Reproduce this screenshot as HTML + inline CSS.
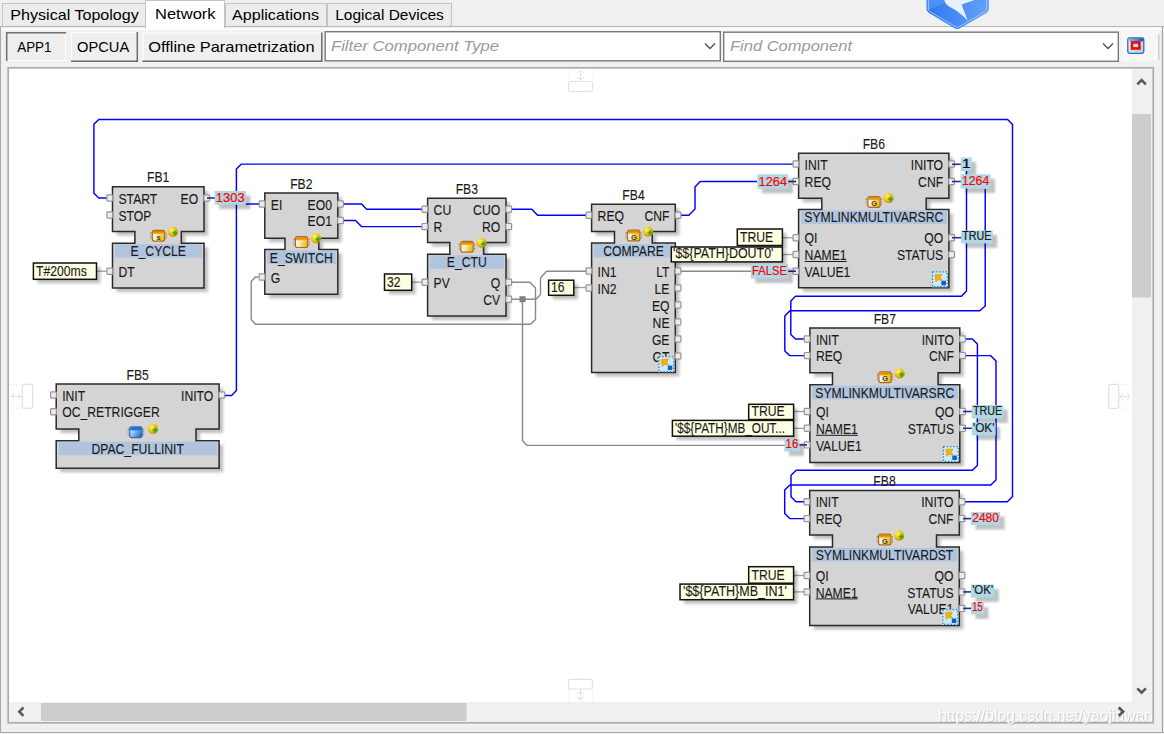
<!DOCTYPE html>
<html><head><meta charset="utf-8"><style>
html,body{margin:0;padding:0;background:#f0f0f0;overflow:hidden}
svg{display:block;font-family:"Liberation Sans",sans-serif}
</style></head><body>
<svg width="1164" height="734" viewBox="0 0 1164 734">
<rect x="0" y="0" width="1164" height="734" fill="#f0f0f0"/>
<rect x="2.5" y="3.5" width="143" height="24" fill="#ececec" stroke="#c4c4c4" stroke-width="1"/>
<text x="10.3" y="19.5" font-size="15" fill="#000" text-anchor="start" textLength="128.5" lengthAdjust="spacingAndGlyphs" >Physical Topology</text>
<rect x="225.5" y="3.5" width="101" height="24" fill="#ececec" stroke="#c4c4c4" stroke-width="1"/>
<text x="232.0" y="19.5" font-size="15" fill="#000" text-anchor="start" textLength="87.0" lengthAdjust="spacingAndGlyphs" >Applications</text>
<rect x="327.5" y="3.5" width="124" height="24" fill="#ececec" stroke="#c4c4c4" stroke-width="1"/>
<text x="335.2" y="19.5" font-size="15" fill="#000" text-anchor="start" textLength="108.6" lengthAdjust="spacingAndGlyphs" >Logical Devices</text>
<line x1="0" y1="26.5" x2="1164" y2="26.5" stroke="#b8b8b8" stroke-width="1.2"/>
<rect x="1" y="27.2" width="1161" height="3.3" fill="#fbfbfb"/>
<rect x="145.5" y="0.5" width="79" height="27" fill="#ffffff" stroke="#c4c4c4" stroke-width="1"/>
<text x="155.0" y="19.0" font-size="15" fill="#000" text-anchor="start" textLength="60.6" lengthAdjust="spacingAndGlyphs" >Network</text>
<rect x="146" y="26" width="78" height="3" fill="#ffffff"/>
<line x1="0.5" y1="27" x2="0.5" y2="733" stroke="#a8a8a8" stroke-width="1"/>
<line x1="1162.5" y1="27" x2="1162.5" y2="733" stroke="#a8a8a8" stroke-width="1.2"/>
<line x1="0" y1="732.5" x2="1164" y2="732.5" stroke="#a8a8a8" stroke-width="1.2"/>
<defs><pattern id="dots" width="2" height="2" patternUnits="userSpaceOnUse"><rect width="2" height="2" fill="#f6f6f6"/><rect width="1" height="1" fill="#e6e6e6"/><rect x="1" y="1" width="1" height="1" fill="#e6e6e6"/></pattern></defs>
<rect x="6" y="32" width="60" height="29" fill="url(#dots)"/>
<path d="M6.7,61 L6.7,32.7 L66,32.7" fill="none" stroke="#707070" stroke-width="1.5"/>
<path d="M8,60.5 L65.5,60.5 L65.5,34" fill="none" stroke="#ffffff" stroke-width="1"/>
<text x="17.2" y="52.0" font-size="15" fill="#000" text-anchor="start" textLength="34.3" lengthAdjust="spacingAndGlyphs" >APP1</text>
<rect x="71" y="32" width="67" height="30" fill="#efefef"/>
<path d="M71.5,62 L71.5,32.5 L138,32.5" fill="none" stroke="#ffffff" stroke-width="1"/>
<path d="M71,61.3 L137.3,61.3 L137.3,32" fill="none" stroke="#6a6a6a" stroke-width="1.5"/>
<text x="77.0" y="52.0" font-size="15" fill="#000" text-anchor="start" textLength="52.2" lengthAdjust="spacingAndGlyphs" >OPCUA</text>
<rect x="142.5" y="32.5" width="180.0" height="29.5" fill="#efefef"/>
<path d="M143.0,62 L143.0,33.0 L322.5,33.0" fill="none" stroke="#ffffff" stroke-width="1"/>
<path d="M142.5,61.3 L321.8,61.3 L321.8,32.5" fill="none" stroke="#6a6a6a" stroke-width="1.5"/>
<text x="148.2" y="52.0" font-size="15" fill="#000" text-anchor="start" textLength="166.4" lengthAdjust="spacingAndGlyphs" >Offline Parametrization</text>
<rect x="325.2" y="31.7" width="395.1" height="29.1" fill="#ffffff" stroke="#7a7a7a" stroke-width="1.4"/>
<text x="331.0" y="51.0" font-size="15" fill="#9a9a9a" text-anchor="start" textLength="168.0" lengthAdjust="spacingAndGlyphs" font-style="italic" >Filter Component Type</text>
<path d="M705,43.5 L710,48.5 L715,43.5" fill="none" stroke="#505050" stroke-width="1.4"/>
<rect x="723.7" y="32.2" width="394.6" height="29.1" fill="#ffffff" stroke="#7a7a7a" stroke-width="1.4"/>
<text x="730.0" y="51.0" font-size="15" fill="#9a9a9a" text-anchor="start" textLength="122.0" lengthAdjust="spacingAndGlyphs" font-style="italic" >Find Component</text>
<path d="M1103,43.5 L1108,48.5 L1113,43.5" fill="none" stroke="#505050" stroke-width="1.4"/>
<rect x="1121" y="31" width="37" height="30" fill="#f7f7f7"/>
<line x1="1158.8" y1="35" x2="1158.8" y2="60" stroke="#c8c8c8" stroke-width="1.2"/>
<defs><linearGradient id="ictop" x1="0" y1="0" x2="1" y2="0"><stop offset="0" stop-color="#80d0f8"/><stop offset="1" stop-color="#0058d8"/></linearGradient><linearGradient id="icin" x1="0" y1="0" x2="1" y2="1"><stop offset="0" stop-color="#f4fcff"/><stop offset="1" stop-color="#98d0f0"/></linearGradient></defs>
<rect x="1127.8" y="38" width="16" height="15.4" rx="1.8" fill="url(#icin)" stroke="#3a6aa8" stroke-width="1.3"/>
<rect x="1128.5" y="38.6" width="14.6" height="2.8" fill="url(#ictop)"/>
<rect x="1130.7" y="41.1" width="10" height="8.7" fill="#ff0000"/>
<rect x="1133.3" y="43.8" width="4.8" height="3.3" fill="#c0f0fc"/>
<rect x="8.2" y="67.8" width="1145" height="655" fill="#ffffff" stroke="#ababab" stroke-width="1.7"/>
<rect x="1132" y="69" width="20" height="633" fill="#f0f0f0"/>
<rect x="1132" y="114" width="19" height="183.5" fill="#cdcdcd"/>
<rect x="9" y="702" width="1143" height="20" fill="#f0f0f0"/>
<rect x="41" y="703" width="425.5" height="18" fill="#cdcdcd"/>
<path d="M1137.3,84.3 L1141.6,80 L1145.9,84.3" fill="none" stroke="#5a5a5a" stroke-width="2.6"/>
<path d="M1137.3,688.3 L1141.6,692.6 L1145.9,688.3" fill="none" stroke="#5a5a5a" stroke-width="2.6"/>
<path d="M23.5,707.5 L19.3,711.7 L23.5,715.9" fill="none" stroke="#5a5a5a" stroke-width="2.6"/>
<path d="M1118.8,707.5 L1123,711.7 L1118.8,715.9" fill="none" stroke="#5a5a5a" stroke-width="2.6"/>
<defs>
<filter id="sh" x="-20%" y="-20%" width="140%" height="140%"><feGaussianBlur stdDeviation="1.8"/></filter><filter id="sh2" x="-30%" y="-50%" width="160%" height="200%"><feGaussianBlur stdDeviation="1.1"/></filter>
<linearGradient id="hexg" x1="0" y1="0" x2="1" y2="1"><stop offset="0" stop-color="#2f76f4"/><stop offset="1" stop-color="#6aa0f8"/></linearGradient>
<linearGradient id="gicon" x1="0" y1="0" x2="1" y2="0.3"><stop offset="0" stop-color="#ffffff"/><stop offset="0.45" stop-color="#f4eec0"/><stop offset="1" stop-color="#e8c010"/></linearGradient>
<linearGradient id="gtop" x1="0" y1="0" x2="0" y2="1"><stop offset="0" stop-color="#d87800"/><stop offset="1" stop-color="#ffb000"/></linearGradient>
<radialGradient id="globeg" cx="0.35" cy="0.3" r="0.7"><stop offset="0" stop-color="#fff070"/><stop offset="0.6" stop-color="#f0c000"/><stop offset="1" stop-color="#e08800"/></radialGradient>
<linearGradient id="btop" x1="0" y1="0" x2="0" y2="1"><stop offset="0" stop-color="#1060d0"/><stop offset="1" stop-color="#2080f0"/></linearGradient>
<linearGradient id="bicon" x1="0" y1="0" x2="1" y2="0.6"><stop offset="0" stop-color="#ffffff"/><stop offset="1" stop-color="#1878d0"/></linearGradient>
</defs>
<path d="M112.5,186.7 L204,186.7 L204,231.5 L181.3,231.5 L181.3,243.2 L204,243.2 L204,288 L112.5,288 L112.5,243.2 L134.9,243.2 L134.9,231.5 L112.5,231.5 Z" transform="translate(4,4)" fill="#000" opacity="0.25" filter="url(#sh)"/>
<path d="M264.8,193 L337.8,193 L337.8,238.3 L318.8,238.3 L318.8,249.6 L337.8,249.6 L337.8,294.3 L264.8,294.3 L264.8,249.6 L285,249.6 L285,238.3 L264.8,238.3 Z" transform="translate(4,4)" fill="#000" opacity="0.25" filter="url(#sh)"/>
<path d="M427.6,198.3 L506,198.3 L506,242.5 L483.6,242.5 L483.6,254.3 L506,254.3 L506,316 L427.6,316 L427.6,254.3 L449.8,254.3 L449.8,242.5 L427.6,242.5 Z" transform="translate(4,4)" fill="#000" opacity="0.25" filter="url(#sh)"/>
<path d="M591.6,204.3 L675.3,204.3 L675.3,231.5 L652.2,231.5 L652.2,243 L675.3,243 L675.3,372.6 L591.6,372.6 L591.6,243 L614.5,243 L614.5,231.5 L591.6,231.5 Z" transform="translate(4,4)" fill="#000" opacity="0.25" filter="url(#sh)"/>
<path d="M56.2,383.9 L219.1,383.9 L219.1,429 L196,429 L196,440.7 L219.1,440.7 L219.1,468.3 L56.2,468.3 L56.2,440.7 L78.8,440.7 L78.8,429 L56.2,429 Z" transform="translate(4,4)" fill="#000" opacity="0.25" filter="url(#sh)"/>
<path d="M798.6,153.2 L948.9,153.2 L948.9,198.3 L926.2,198.3 L926.2,209.4 L948.9,209.4 L948.9,287.8 L798.6,287.8 L798.6,209.4 L821.8,209.4 L821.8,198.3 L798.6,198.3 Z" transform="translate(4,4)" fill="#000" opacity="0.25" filter="url(#sh)"/>
<path d="M809.9,327.9 L959.8,327.9 L959.8,372.7 L938.1,372.7 L938.1,384.8 L959.8,384.8 L959.8,462.5 L809.9,462.5 L809.9,384.8 L832.5,384.8 L832.5,372.7 L809.9,372.7 Z" transform="translate(4,4)" fill="#000" opacity="0.25" filter="url(#sh)"/>
<path d="M809.7,490.6 L959.3,490.6 L959.3,534.9 L936.5,534.9 L936.5,547 L959.3,547 L959.3,625.5 L809.7,625.5 L809.7,547 L832.5,547 L832.5,534.9 L809.7,534.9 Z" transform="translate(4,4)" fill="#000" opacity="0.25" filter="url(#sh)"/>
<path d="M965,501.8 L1007.4,501.8 L1012.5,496.6 L1012.5,124.4 L1007.6,119.4 L98.8,119.4 L93.9,124.3 L93.9,193.2 L98.8,198 L107,198" fill="none" stroke="#0000ff" stroke-width="1.45" stroke-linejoin="round"/>
<path d="M224.5,395.4 L231.6,395.4 L236.4,390.6 L236.4,169 L241.4,164.1 L798,164.1" fill="none" stroke="#0000ff" stroke-width="1.45" stroke-linejoin="round"/>
<path d="M245,204 L259,204" fill="none" stroke="#0000ff" stroke-width="1.45" stroke-linejoin="round"/>
<path d="M343,204 L361.6,204 L366.6,209.2 L422,209.2" fill="none" stroke="#0000ff" stroke-width="1.45" stroke-linejoin="round"/>
<path d="M343,220.5 L355.5,220.5 L361.5,226.6 L422,226.6" fill="none" stroke="#0000ff" stroke-width="1.45" stroke-linejoin="round"/>
<path d="M511,209.2 L531.8,209.2 L537.6,215.2 L586,215.2" fill="none" stroke="#0000ff" stroke-width="1.45" stroke-linejoin="round"/>
<path d="M681,215.2 L688.8,215.2 L695,209 L695,187 L700.2,181.5 L757,181.5" fill="none" stroke="#0000ff" stroke-width="1.45" stroke-linejoin="round"/>
<path d="M966.5,171 L966.5,291 L961.5,296.3 L795.5,296.3 L790.8,301 L790.8,334.4 L795.5,339 L804.5,339" fill="none" stroke="#0000ff" stroke-width="1.45" stroke-linejoin="round"/>
<path d="M985.2,189 L985.2,306 L979.8,310.7 L790,310.7 L784.8,316 L784.8,351 L789.8,355.6 L804.5,355.6" fill="none" stroke="#0000ff" stroke-width="1.45" stroke-linejoin="round"/>
<path d="M965,339 L972.3,339 L977.4,344 L977.4,465.5 L972.4,470.3 L796.2,470.3 L791,475.3 L791,496.7 L796,501.8 L804.5,501.8" fill="none" stroke="#0000ff" stroke-width="1.45" stroke-linejoin="round"/>
<path d="M965,355.6 L990.5,355.6 L996,361 L996,480 L990.8,485 L789.8,485 L784.7,490 L784.7,513.4 L789.8,518.6 L804.5,518.6" fill="none" stroke="#0000ff" stroke-width="1.45" stroke-linejoin="round"/>
<path d="M511,282.3 L530,282.3 L535.5,288 L535.5,319.4 L530.5,324.3 L255.5,324.3 L251.2,319.5 L251.2,281.5 L255.3,277 L258.5,277" fill="none" stroke="#8a8a8a" stroke-width="1.4" stroke-linejoin="round"/>
<path d="M511,299.2 L536,299.2 L540.5,294.6 L540.5,278 L546.5,271.3 L586,271.3" fill="none" stroke="#8a8a8a" stroke-width="1.4" stroke-linejoin="round"/>
<path d="M522.5,299.2 L522.5,440.6 L527.1,445.4 L785,445.4" fill="none" stroke="#8a8a8a" stroke-width="1.4" stroke-linejoin="round"/>
<path d="M681,271.3 L751,271.3" fill="none" stroke="#8a8a8a" stroke-width="1.4" stroke-linejoin="round"/>
<rect x="519.5" y="296.2" width="6" height="6" fill="#808080"/>
<path d="M96.5,271.2 L107.5,271.2" fill="none" stroke="#a0a0a0" stroke-width="1.3" stroke-linejoin="round"/>
<path d="M411.7,282.2 L422.5,282.2" fill="none" stroke="#a0a0a0" stroke-width="1.3" stroke-linejoin="round"/>
<path d="M573.8,287.5 L586,287.5" fill="none" stroke="#a0a0a0" stroke-width="1.3" stroke-linejoin="round"/>
<path d="M782.4,237.7 L793.5,237.7" fill="none" stroke="#a0a0a0" stroke-width="1.3" stroke-linejoin="round"/>
<path d="M782.4,254.5 L793.5,254.5" fill="none" stroke="#a0a0a0" stroke-width="1.3" stroke-linejoin="round"/>
<path d="M793.6,411.5 L804.5,411.5" fill="none" stroke="#a0a0a0" stroke-width="1.3" stroke-linejoin="round"/>
<path d="M793.6,428.3 L804.5,428.3" fill="none" stroke="#a0a0a0" stroke-width="1.3" stroke-linejoin="round"/>
<path d="M793.6,575.5 L804.5,575.5" fill="none" stroke="#a0a0a0" stroke-width="1.3" stroke-linejoin="round"/>
<path d="M793.6,591.9 L804.5,591.9" fill="none" stroke="#a0a0a0" stroke-width="1.3" stroke-linejoin="round"/>
<path d="M112.5,186.7 L204,186.7 L204,231.5 L181.3,231.5 L181.3,243.2 L204,243.2 L204,288 L112.5,288 L112.5,243.2 L134.9,243.2 L134.9,231.5 L112.5,231.5 Z" fill="#d4d4d4" stroke="#2a2a2a" stroke-width="1.5" stroke-linejoin="miter"/>
<rect x="115.0" y="244.2" width="87.0" height="13.5" fill="#b0c4de"/>
<text x="158.2" y="256.2" font-size="14" fill="#1a1a1a" text-anchor="middle" textLength="55.5" lengthAdjust="spacingAndGlyphs" stroke="#1a1a1a" stroke-width="0.12">E_CYCLE</text>
<text x="158.2" y="182.3" font-size="14" fill="#1a1a1a" text-anchor="middle" textLength="22.3" lengthAdjust="spacingAndGlyphs" stroke="#1a1a1a" stroke-width="0.12">FB1</text>
<rect x="106.9" y="194.9" width="5.8" height="6.2" rx="0.8" fill="#ececec" stroke="#959595" stroke-width="1.2"/>
<text x="118.5" y="203.6" font-size="14" fill="#1a1a1a" text-anchor="start" textLength="38.8" lengthAdjust="spacingAndGlyphs" stroke="#1a1a1a" stroke-width="0.12">START</text>
<rect x="203.8" y="194.9" width="5.8" height="6.2" rx="0.8" fill="#ececec" stroke="#959595" stroke-width="1.2"/>
<text x="198.2" y="203.6" font-size="14" fill="#1a1a1a" text-anchor="end" textLength="17.6" lengthAdjust="spacingAndGlyphs" stroke="#1a1a1a" stroke-width="0.12">EO</text>
<rect x="106.9" y="211.9" width="5.8" height="6.2" rx="0.8" fill="#ececec" stroke="#959595" stroke-width="1.2"/>
<text x="118.5" y="220.6" font-size="14" fill="#1a1a1a" text-anchor="start" textLength="32.9" lengthAdjust="spacingAndGlyphs" stroke="#1a1a1a" stroke-width="0.12">STOP</text>
<rect x="106.9" y="268.09999999999997" width="5.8" height="6.2" rx="0.8" fill="#ececec" stroke="#959595" stroke-width="1.2"/>
<text x="118.5" y="276.8" font-size="14" fill="#1a1a1a" text-anchor="start" textLength="16.2" lengthAdjust="spacingAndGlyphs" stroke="#1a1a1a" stroke-width="0.12">DT</text>
<rect x="150.75" y="232.7" width="15.5" height="6" fill="none" stroke="#7a5a40" stroke-width="0.8" stroke-dasharray="1,1.2"/>
<rect x="152.35" y="230.29999999999998" width="12.3" height="10.8" rx="2" fill="url(#gicon)" stroke="#b06a28" stroke-width="1.2"/>
<rect x="152.95" y="230.89999999999998" width="11.1" height="3" fill="url(#gtop)"/>
<text x="158.65" y="239.7" font-size="7.5" text-anchor="middle" fill="#3a3a3a" font-weight="bold">s</text>
<circle cx="172.95" cy="231.89999999999998" r="5.1" fill="url(#globeg)"/>
<path d="M175.05,229.89999999999998 Q175.75,232.0 178.05,232.89999999999998 Q175.75,233.7 175.05,236.29999999999998 Q174.35,233.7 172.05,232.89999999999998 Q174.35,232.0 175.05,229.89999999999998 Z" fill="#28b030"/>
<path d="M264.8,193 L337.8,193 L337.8,238.3 L318.8,238.3 L318.8,249.6 L337.8,249.6 L337.8,294.3 L264.8,294.3 L264.8,249.6 L285,249.6 L285,238.3 L264.8,238.3 Z" fill="#d4d4d4" stroke="#2a2a2a" stroke-width="1.5" stroke-linejoin="miter"/>
<rect x="267.3" y="250.6" width="68.5" height="13.5" fill="#b0c4de"/>
<text x="301.3" y="262.6" font-size="14" fill="#1a1a1a" text-anchor="middle" textLength="62.9" lengthAdjust="spacingAndGlyphs" stroke="#1a1a1a" stroke-width="0.12">E_SWITCH</text>
<text x="301.3" y="188.6" font-size="14" fill="#1a1a1a" text-anchor="middle" textLength="22.3" lengthAdjust="spacingAndGlyphs" stroke="#1a1a1a" stroke-width="0.12">FB2</text>
<rect x="259.2" y="200.9" width="5.8" height="6.2" rx="0.8" fill="#ececec" stroke="#959595" stroke-width="1.2"/>
<text x="270.8" y="209.6" font-size="14" fill="#1a1a1a" text-anchor="start" textLength="11.5" lengthAdjust="spacingAndGlyphs" stroke="#1a1a1a" stroke-width="0.12">EI</text>
<rect x="337.6" y="200.9" width="5.8" height="6.2" rx="0.8" fill="#ececec" stroke="#959595" stroke-width="1.2"/>
<text x="332.0" y="209.6" font-size="14" fill="#1a1a1a" text-anchor="end" textLength="24.4" lengthAdjust="spacingAndGlyphs" stroke="#1a1a1a" stroke-width="0.12">EO0</text>
<rect x="337.6" y="217.4" width="5.8" height="6.2" rx="0.8" fill="#ececec" stroke="#959595" stroke-width="1.2"/>
<text x="332.0" y="226.1" font-size="14" fill="#1a1a1a" text-anchor="end" textLength="24.4" lengthAdjust="spacingAndGlyphs" stroke="#1a1a1a" stroke-width="0.12">EO1</text>
<rect x="259.2" y="273.9" width="5.8" height="6.2" rx="0.8" fill="#ececec" stroke="#959595" stroke-width="1.2"/>
<text x="270.8" y="282.6" font-size="14" fill="#1a1a1a" text-anchor="start" textLength="9.5" lengthAdjust="spacingAndGlyphs" stroke="#1a1a1a" stroke-width="0.12">G</text>
<rect x="293.8" y="239.1" width="15.5" height="6" fill="none" stroke="#7a5a40" stroke-width="0.8" stroke-dasharray="1,1.2"/>
<rect x="295.40000000000003" y="236.7" width="12.3" height="10.8" rx="2" fill="url(#gicon)" stroke="#b06a28" stroke-width="1.2"/>
<rect x="296.0" y="237.29999999999998" width="11.1" height="3" fill="url(#gtop)"/>
<circle cx="316.0" cy="238.29999999999998" r="5.1" fill="url(#globeg)"/>
<path d="M318.1,236.29999999999998 Q318.8,238.4 321.1,239.29999999999998 Q318.8,240.1 318.1,242.7 Q317.40000000000003,240.1 315.1,239.29999999999998 Q317.40000000000003,238.4 318.1,236.29999999999998 Z" fill="#28b030"/>
<path d="M427.6,198.3 L506,198.3 L506,242.5 L483.6,242.5 L483.6,254.3 L506,254.3 L506,316 L427.6,316 L427.6,254.3 L449.8,254.3 L449.8,242.5 L427.6,242.5 Z" fill="#d4d4d4" stroke="#2a2a2a" stroke-width="1.5" stroke-linejoin="miter"/>
<rect x="430.1" y="255.3" width="73.89999999999998" height="13.5" fill="#b0c4de"/>
<text x="466.8" y="267.3" font-size="14" fill="#1a1a1a" text-anchor="middle" textLength="39.9" lengthAdjust="spacingAndGlyphs" stroke="#1a1a1a" stroke-width="0.12">E_CTU</text>
<text x="466.8" y="193.9" font-size="14" fill="#1a1a1a" text-anchor="middle" textLength="22.3" lengthAdjust="spacingAndGlyphs" stroke="#1a1a1a" stroke-width="0.12">FB3</text>
<rect x="422.0" y="206.1" width="5.8" height="6.2" rx="0.8" fill="#ececec" stroke="#959595" stroke-width="1.2"/>
<text x="433.6" y="214.8" font-size="14" fill="#1a1a1a" text-anchor="start" textLength="17.6" lengthAdjust="spacingAndGlyphs" stroke="#1a1a1a" stroke-width="0.12">CU</text>
<rect x="505.8" y="206.1" width="5.8" height="6.2" rx="0.8" fill="#ececec" stroke="#959595" stroke-width="1.2"/>
<text x="500.2" y="214.8" font-size="14" fill="#1a1a1a" text-anchor="end" textLength="27.1" lengthAdjust="spacingAndGlyphs" stroke="#1a1a1a" stroke-width="0.12">CUO</text>
<rect x="422.0" y="223.5" width="5.8" height="6.2" rx="0.8" fill="#ececec" stroke="#959595" stroke-width="1.2"/>
<text x="433.6" y="232.2" font-size="14" fill="#1a1a1a" text-anchor="start" textLength="8.8" lengthAdjust="spacingAndGlyphs" stroke="#1a1a1a" stroke-width="0.12">R</text>
<rect x="505.8" y="223.5" width="5.8" height="6.2" rx="0.8" fill="#ececec" stroke="#959595" stroke-width="1.2"/>
<text x="500.2" y="232.2" font-size="14" fill="#1a1a1a" text-anchor="end" textLength="18.3" lengthAdjust="spacingAndGlyphs" stroke="#1a1a1a" stroke-width="0.12">RO</text>
<rect x="422.0" y="279.09999999999997" width="5.8" height="6.2" rx="0.8" fill="#ececec" stroke="#959595" stroke-width="1.2"/>
<text x="433.6" y="287.8" font-size="14" fill="#1a1a1a" text-anchor="start" textLength="16.2" lengthAdjust="spacingAndGlyphs" stroke="#1a1a1a" stroke-width="0.12">PV</text>
<rect x="505.8" y="279.09999999999997" width="5.8" height="6.2" rx="0.8" fill="#ececec" stroke="#959595" stroke-width="1.2"/>
<text x="500.2" y="287.8" font-size="14" fill="#1a1a1a" text-anchor="end" textLength="9.5" lengthAdjust="spacingAndGlyphs" stroke="#1a1a1a" stroke-width="0.12">Q</text>
<rect x="505.8" y="296.09999999999997" width="5.8" height="6.2" rx="0.8" fill="#ececec" stroke="#959595" stroke-width="1.2"/>
<text x="500.2" y="304.8" font-size="14" fill="#1a1a1a" text-anchor="end" textLength="16.9" lengthAdjust="spacingAndGlyphs" stroke="#1a1a1a" stroke-width="0.12">CV</text>
<rect x="459.3" y="243.8" width="15.5" height="6" fill="none" stroke="#7a5a40" stroke-width="0.8" stroke-dasharray="1,1.2"/>
<rect x="460.90000000000003" y="241.4" width="12.3" height="10.8" rx="2" fill="url(#gicon)" stroke="#b06a28" stroke-width="1.2"/>
<rect x="461.5" y="242.0" width="11.1" height="3" fill="url(#gtop)"/>
<circle cx="481.5" cy="243.0" r="5.1" fill="url(#globeg)"/>
<path d="M483.6,241.0 Q484.3,243.10000000000002 486.6,244.0 Q484.3,244.8 483.6,247.4 Q482.90000000000003,244.8 480.6,244.0 Q482.90000000000003,243.10000000000002 483.6,241.0 Z" fill="#28b030"/>
<path d="M591.6,204.3 L675.3,204.3 L675.3,231.5 L652.2,231.5 L652.2,243 L675.3,243 L675.3,372.6 L591.6,372.6 L591.6,243 L614.5,243 L614.5,231.5 L591.6,231.5 Z" fill="#d4d4d4" stroke="#2a2a2a" stroke-width="1.5" stroke-linejoin="miter"/>
<rect x="594.1" y="244" width="79.19999999999993" height="13.5" fill="#b0c4de"/>
<text x="633.5" y="256.0" font-size="14" fill="#1a1a1a" text-anchor="middle" textLength="60.7" lengthAdjust="spacingAndGlyphs" stroke="#1a1a1a" stroke-width="0.12">COMPARE</text>
<text x="633.5" y="199.9" font-size="14" fill="#1a1a1a" text-anchor="middle" textLength="22.3" lengthAdjust="spacingAndGlyphs" stroke="#1a1a1a" stroke-width="0.12">FB4</text>
<rect x="586.0" y="212.1" width="5.8" height="6.2" rx="0.8" fill="#ececec" stroke="#959595" stroke-width="1.2"/>
<text x="597.6" y="220.8" font-size="14" fill="#1a1a1a" text-anchor="start" textLength="26.4" lengthAdjust="spacingAndGlyphs" stroke="#1a1a1a" stroke-width="0.12">REQ</text>
<rect x="675.0999999999999" y="212.1" width="5.8" height="6.2" rx="0.8" fill="#ececec" stroke="#959595" stroke-width="1.2"/>
<text x="669.5" y="220.8" font-size="14" fill="#1a1a1a" text-anchor="end" textLength="25.0" lengthAdjust="spacingAndGlyphs" stroke="#1a1a1a" stroke-width="0.12">CNF</text>
<rect x="586.0" y="267.9" width="5.8" height="6.2" rx="0.8" fill="#ececec" stroke="#959595" stroke-width="1.2"/>
<text x="597.6" y="276.6" font-size="14" fill="#1a1a1a" text-anchor="start" textLength="19.0" lengthAdjust="spacingAndGlyphs" stroke="#1a1a1a" stroke-width="0.12">IN1</text>
<rect x="675.0999999999999" y="267.9" width="5.8" height="6.2" rx="0.8" fill="#ececec" stroke="#959595" stroke-width="1.2"/>
<text x="669.5" y="276.6" font-size="14" fill="#1a1a1a" text-anchor="end" textLength="13.3" lengthAdjust="spacingAndGlyphs" stroke="#1a1a1a" stroke-width="0.12">LT</text>
<rect x="586.0" y="284.9" width="5.8" height="6.2" rx="0.8" fill="#ececec" stroke="#959595" stroke-width="1.2"/>
<text x="597.6" y="293.6" font-size="14" fill="#1a1a1a" text-anchor="start" textLength="19.0" lengthAdjust="spacingAndGlyphs" stroke="#1a1a1a" stroke-width="0.12">IN2</text>
<rect x="675.0999999999999" y="284.9" width="5.8" height="6.2" rx="0.8" fill="#ececec" stroke="#959595" stroke-width="1.2"/>
<text x="669.5" y="293.6" font-size="14" fill="#1a1a1a" text-anchor="end" textLength="14.9" lengthAdjust="spacingAndGlyphs" stroke="#1a1a1a" stroke-width="0.12">LE</text>
<rect x="675.0999999999999" y="301.9" width="5.8" height="6.2" rx="0.8" fill="#ececec" stroke="#959595" stroke-width="1.2"/>
<text x="669.5" y="310.6" font-size="14" fill="#1a1a1a" text-anchor="end" textLength="17.6" lengthAdjust="spacingAndGlyphs" stroke="#1a1a1a" stroke-width="0.12">EQ</text>
<rect x="675.0999999999999" y="318.9" width="5.8" height="6.2" rx="0.8" fill="#ececec" stroke="#959595" stroke-width="1.2"/>
<text x="669.5" y="327.6" font-size="14" fill="#1a1a1a" text-anchor="end" textLength="16.9" lengthAdjust="spacingAndGlyphs" stroke="#1a1a1a" stroke-width="0.12">NE</text>
<rect x="675.0999999999999" y="335.9" width="5.8" height="6.2" rx="0.8" fill="#ececec" stroke="#959595" stroke-width="1.2"/>
<text x="669.5" y="344.6" font-size="14" fill="#1a1a1a" text-anchor="end" textLength="17.6" lengthAdjust="spacingAndGlyphs" stroke="#1a1a1a" stroke-width="0.12">GE</text>
<rect x="675.0999999999999" y="352.9" width="5.8" height="6.2" rx="0.8" fill="#ececec" stroke="#959595" stroke-width="1.2"/>
<text x="669.5" y="361.6" font-size="14" fill="#1a1a1a" text-anchor="end" textLength="16.9" lengthAdjust="spacingAndGlyphs" stroke="#1a1a1a" stroke-width="0.12">GT</text>
<rect x="625.95" y="232.5" width="15.5" height="6" fill="none" stroke="#7a5a40" stroke-width="0.8" stroke-dasharray="1,1.2"/>
<rect x="627.5500000000001" y="230.1" width="12.3" height="10.8" rx="2" fill="url(#gicon)" stroke="#b06a28" stroke-width="1.2"/>
<rect x="628.1500000000001" y="230.7" width="11.1" height="3" fill="url(#gtop)"/>
<text x="633.85" y="239.5" font-size="7.5" text-anchor="middle" fill="#3a3a3a" font-weight="bold">G</text>
<circle cx="648.1500000000001" cy="231.7" r="5.1" fill="url(#globeg)"/>
<path d="M650.25,229.7 Q650.95,231.8 653.25,232.7 Q650.95,233.5 650.25,236.1 Q649.5500000000001,233.5 647.25,232.7 Q649.5500000000001,231.8 650.25,229.7 Z" fill="#28b030"/>
<rect x="658.3" y="356.1" width="16" height="16" fill="#c8ecfa"/>
<rect x="658.9" y="356.70000000000005" width="14.8" height="14.8" fill="none" stroke="#4a78b0" stroke-width="1.2" stroke-dasharray="1.6,1.6"/>
<path d="M661.3,359.6 L668.3,359.1 L666.8,362.6 L668.8,365.1 L664.3,364.6 L662.3,366.6 Z" fill="#f4b400" stroke="#e89000" stroke-width="0.6"/>
<rect x="667.8" y="365.6" width="4.5" height="4.5" fill="#0a60d0"/>
<path d="M56.2,383.9 L219.1,383.9 L219.1,429 L196,429 L196,440.7 L219.1,440.7 L219.1,468.3 L56.2,468.3 L56.2,440.7 L78.8,440.7 L78.8,429 L56.2,429 Z" fill="#d4d4d4" stroke="#2a2a2a" stroke-width="1.5" stroke-linejoin="miter"/>
<rect x="58.7" y="441.7" width="158.39999999999998" height="13.5" fill="#b0c4de"/>
<text x="137.7" y="453.7" font-size="14" fill="#1a1a1a" text-anchor="middle" textLength="92.5" lengthAdjust="spacingAndGlyphs" stroke="#1a1a1a" stroke-width="0.12">DPAC_FULLINIT</text>
<text x="137.7" y="379.5" font-size="14" fill="#1a1a1a" text-anchor="middle" textLength="22.3" lengthAdjust="spacingAndGlyphs" stroke="#1a1a1a" stroke-width="0.12">FB5</text>
<rect x="50.6" y="391.9" width="5.8" height="6.2" rx="0.8" fill="#ececec" stroke="#959595" stroke-width="1.2"/>
<text x="62.2" y="400.6" font-size="14" fill="#1a1a1a" text-anchor="start" textLength="23.0" lengthAdjust="spacingAndGlyphs" stroke="#1a1a1a" stroke-width="0.12">INIT</text>
<rect x="218.9" y="391.9" width="5.8" height="6.2" rx="0.8" fill="#ececec" stroke="#959595" stroke-width="1.2"/>
<text x="213.3" y="400.6" font-size="14" fill="#1a1a1a" text-anchor="end" textLength="32.3" lengthAdjust="spacingAndGlyphs" stroke="#1a1a1a" stroke-width="0.12">INITO</text>
<rect x="50.6" y="408.7" width="5.8" height="6.2" rx="0.8" fill="#ececec" stroke="#959595" stroke-width="1.2"/>
<text x="62.2" y="417.4" font-size="14" fill="#1a1a1a" text-anchor="start" textLength="97.5" lengthAdjust="spacingAndGlyphs" stroke="#1a1a1a" stroke-width="0.12">OC_RETRIGGER</text>
<rect x="128.15" y="429.2" width="15.5" height="6" fill="none" stroke="#7a5a40" stroke-width="0.8" stroke-dasharray="1,1.2"/>
<rect x="129.75" y="426.8" width="12.3" height="10.8" rx="2" fill="url(#bicon)" stroke="#3a6aa8" stroke-width="1.2"/>
<rect x="130.35" y="427.4" width="11.1" height="3" fill="url(#btop)"/>
<circle cx="153.04999999999998" cy="428.9" r="5.1" fill="url(#globeg)"/>
<path d="M155.15,426.9 Q155.85,429.0 158.15,429.9 Q155.85,430.7 155.15,433.3 Q154.45,430.7 152.15,429.9 Q154.45,429.0 155.15,426.9 Z" fill="#28b030"/>
<path d="M798.6,153.2 L948.9,153.2 L948.9,198.3 L926.2,198.3 L926.2,209.4 L948.9,209.4 L948.9,287.8 L798.6,287.8 L798.6,209.4 L821.8,209.4 L821.8,198.3 L798.6,198.3 Z" fill="#d4d4d4" stroke="#2a2a2a" stroke-width="1.5" stroke-linejoin="miter"/>
<rect x="801.1" y="210.4" width="145.79999999999995" height="13.5" fill="#b0c4de"/>
<text x="873.8" y="222.4" font-size="14" fill="#1a1a1a" text-anchor="middle" textLength="139.0" lengthAdjust="spacingAndGlyphs" stroke="#1a1a1a" stroke-width="0.12">SYMLINKMULTIVARSRC</text>
<text x="873.8" y="148.8" font-size="14" fill="#1a1a1a" text-anchor="middle" textLength="22.3" lengthAdjust="spacingAndGlyphs" stroke="#1a1a1a" stroke-width="0.12">FB6</text>
<rect x="793.0" y="160.9" width="5.8" height="6.2" rx="0.8" fill="#ececec" stroke="#959595" stroke-width="1.2"/>
<text x="804.6" y="169.6" font-size="14" fill="#1a1a1a" text-anchor="start" textLength="23.0" lengthAdjust="spacingAndGlyphs" stroke="#1a1a1a" stroke-width="0.12">INIT</text>
<rect x="948.6999999999999" y="160.9" width="5.8" height="6.2" rx="0.8" fill="#ececec" stroke="#959595" stroke-width="1.2"/>
<text x="943.1" y="169.6" font-size="14" fill="#1a1a1a" text-anchor="end" textLength="32.3" lengthAdjust="spacingAndGlyphs" stroke="#1a1a1a" stroke-width="0.12">INITO</text>
<rect x="793.0" y="178.4" width="5.8" height="6.2" rx="0.8" fill="#ececec" stroke="#959595" stroke-width="1.2"/>
<text x="804.6" y="187.1" font-size="14" fill="#1a1a1a" text-anchor="start" textLength="26.4" lengthAdjust="spacingAndGlyphs" stroke="#1a1a1a" stroke-width="0.12">REQ</text>
<rect x="948.6999999999999" y="178.4" width="5.8" height="6.2" rx="0.8" fill="#ececec" stroke="#959595" stroke-width="1.2"/>
<text x="943.1" y="187.1" font-size="14" fill="#1a1a1a" text-anchor="end" textLength="25.0" lengthAdjust="spacingAndGlyphs" stroke="#1a1a1a" stroke-width="0.12">CNF</text>
<rect x="793.0" y="234.6" width="5.8" height="6.2" rx="0.8" fill="#ececec" stroke="#959595" stroke-width="1.2"/>
<text x="804.6" y="243.3" font-size="14" fill="#1a1a1a" text-anchor="start" textLength="12.9" lengthAdjust="spacingAndGlyphs" stroke="#1a1a1a" stroke-width="0.12">QI</text>
<rect x="948.6999999999999" y="234.6" width="5.8" height="6.2" rx="0.8" fill="#ececec" stroke="#959595" stroke-width="1.2"/>
<text x="943.1" y="243.3" font-size="14" fill="#1a1a1a" text-anchor="end" textLength="18.9" lengthAdjust="spacingAndGlyphs" stroke="#1a1a1a" stroke-width="0.12">QO</text>
<rect x="793.0" y="251.4" width="5.8" height="6.2" rx="0.8" fill="#ececec" stroke="#959595" stroke-width="1.2"/>
<text x="804.6" y="260.1" font-size="14" fill="#1a1a1a" text-anchor="start" textLength="42.0" lengthAdjust="spacingAndGlyphs" stroke="#1a1a1a" stroke-width="0.12">NAME1</text>
<line x1="804.6" y1="261.5" x2="846.5639062500001" y2="261.5" stroke="#1a1a1a" stroke-width="1"/>
<rect x="948.6999999999999" y="251.4" width="5.8" height="6.2" rx="0.8" fill="#ececec" stroke="#959595" stroke-width="1.2"/>
<text x="943.1" y="260.1" font-size="14" fill="#1a1a1a" text-anchor="end" textLength="46.2" lengthAdjust="spacingAndGlyphs" stroke="#1a1a1a" stroke-width="0.12">STATUS</text>
<rect x="793.0" y="268.09999999999997" width="5.8" height="6.2" rx="0.8" fill="#ececec" stroke="#959595" stroke-width="1.2"/>
<text x="804.6" y="276.8" font-size="14" fill="#1a1a1a" text-anchor="start" textLength="45.8" lengthAdjust="spacingAndGlyphs" stroke="#1a1a1a" stroke-width="0.12">VALUE1</text>
<rect x="866.25" y="198.9" width="15.5" height="6" fill="none" stroke="#7a5a40" stroke-width="0.8" stroke-dasharray="1,1.2"/>
<rect x="867.85" y="196.5" width="12.3" height="10.8" rx="2" fill="url(#gicon)" stroke="#b06a28" stroke-width="1.2"/>
<rect x="868.45" y="197.1" width="11.1" height="3" fill="url(#gtop)"/>
<text x="874.15" y="205.9" font-size="7.5" text-anchor="middle" fill="#3a3a3a" font-weight="bold">G</text>
<circle cx="888.45" cy="198.1" r="5.1" fill="url(#globeg)"/>
<path d="M890.55,196.1 Q891.25,198.20000000000002 893.55,199.1 Q891.25,199.9 890.55,202.5 Q889.85,199.9 887.55,199.1 Q889.85,198.20000000000002 890.55,196.1 Z" fill="#28b030"/>
<rect x="931.9" y="271.3" width="16" height="16" fill="#c8ecfa"/>
<rect x="932.5" y="271.90000000000003" width="14.8" height="14.8" fill="none" stroke="#4a78b0" stroke-width="1.2" stroke-dasharray="1.6,1.6"/>
<path d="M934.9,274.8 L941.9,274.3 L940.4,277.8 L942.4,280.3 L937.9,279.8 L935.9,281.8 Z" fill="#f4b400" stroke="#e89000" stroke-width="0.6"/>
<rect x="941.4" y="280.8" width="4.5" height="4.5" fill="#0a60d0"/>
<path d="M809.9,327.9 L959.8,327.9 L959.8,372.7 L938.1,372.7 L938.1,384.8 L959.8,384.8 L959.8,462.5 L809.9,462.5 L809.9,384.8 L832.5,384.8 L832.5,372.7 L809.9,372.7 Z" fill="#d4d4d4" stroke="#2a2a2a" stroke-width="1.5" stroke-linejoin="miter"/>
<rect x="812.4" y="385.8" width="145.39999999999998" height="13.5" fill="#b0c4de"/>
<text x="884.8" y="397.8" font-size="14" fill="#1a1a1a" text-anchor="middle" textLength="139.0" lengthAdjust="spacingAndGlyphs" stroke="#1a1a1a" stroke-width="0.12">SYMLINKMULTIVARSRC</text>
<text x="884.8" y="323.5" font-size="14" fill="#1a1a1a" text-anchor="middle" textLength="22.3" lengthAdjust="spacingAndGlyphs" stroke="#1a1a1a" stroke-width="0.12">FB7</text>
<rect x="804.3" y="335.9" width="5.8" height="6.2" rx="0.8" fill="#ececec" stroke="#959595" stroke-width="1.2"/>
<text x="815.9" y="344.6" font-size="14" fill="#1a1a1a" text-anchor="start" textLength="23.0" lengthAdjust="spacingAndGlyphs" stroke="#1a1a1a" stroke-width="0.12">INIT</text>
<rect x="959.5999999999999" y="335.9" width="5.8" height="6.2" rx="0.8" fill="#ececec" stroke="#959595" stroke-width="1.2"/>
<text x="954.0" y="344.6" font-size="14" fill="#1a1a1a" text-anchor="end" textLength="32.3" lengthAdjust="spacingAndGlyphs" stroke="#1a1a1a" stroke-width="0.12">INITO</text>
<rect x="804.3" y="352.5" width="5.8" height="6.2" rx="0.8" fill="#ececec" stroke="#959595" stroke-width="1.2"/>
<text x="815.9" y="361.2" font-size="14" fill="#1a1a1a" text-anchor="start" textLength="26.4" lengthAdjust="spacingAndGlyphs" stroke="#1a1a1a" stroke-width="0.12">REQ</text>
<rect x="959.5999999999999" y="352.5" width="5.8" height="6.2" rx="0.8" fill="#ececec" stroke="#959595" stroke-width="1.2"/>
<text x="954.0" y="361.2" font-size="14" fill="#1a1a1a" text-anchor="end" textLength="25.0" lengthAdjust="spacingAndGlyphs" stroke="#1a1a1a" stroke-width="0.12">CNF</text>
<rect x="804.3" y="408.4" width="5.8" height="6.2" rx="0.8" fill="#ececec" stroke="#959595" stroke-width="1.2"/>
<text x="815.9" y="417.1" font-size="14" fill="#1a1a1a" text-anchor="start" textLength="12.9" lengthAdjust="spacingAndGlyphs" stroke="#1a1a1a" stroke-width="0.12">QI</text>
<rect x="959.5999999999999" y="408.4" width="5.8" height="6.2" rx="0.8" fill="#ececec" stroke="#959595" stroke-width="1.2"/>
<text x="954.0" y="417.1" font-size="14" fill="#1a1a1a" text-anchor="end" textLength="18.9" lengthAdjust="spacingAndGlyphs" stroke="#1a1a1a" stroke-width="0.12">QO</text>
<rect x="804.3" y="425.2" width="5.8" height="6.2" rx="0.8" fill="#ececec" stroke="#959595" stroke-width="1.2"/>
<text x="815.9" y="433.9" font-size="14" fill="#1a1a1a" text-anchor="start" textLength="42.0" lengthAdjust="spacingAndGlyphs" stroke="#1a1a1a" stroke-width="0.12">NAME1</text>
<line x1="815.9" y1="435.3" x2="857.86390625" y2="435.3" stroke="#1a1a1a" stroke-width="1"/>
<rect x="959.5999999999999" y="425.2" width="5.8" height="6.2" rx="0.8" fill="#ececec" stroke="#959595" stroke-width="1.2"/>
<text x="954.0" y="433.9" font-size="14" fill="#1a1a1a" text-anchor="end" textLength="46.2" lengthAdjust="spacingAndGlyphs" stroke="#1a1a1a" stroke-width="0.12">STATUS</text>
<rect x="804.3" y="441.79999999999995" width="5.8" height="6.2" rx="0.8" fill="#ececec" stroke="#959595" stroke-width="1.2"/>
<text x="815.9" y="450.5" font-size="14" fill="#1a1a1a" text-anchor="start" textLength="45.8" lengthAdjust="spacingAndGlyphs" stroke="#1a1a1a" stroke-width="0.12">VALUE1</text>
<rect x="877.3499999999999" y="374.3" width="15.5" height="6" fill="none" stroke="#7a5a40" stroke-width="0.8" stroke-dasharray="1,1.2"/>
<rect x="878.9499999999999" y="371.90000000000003" width="12.3" height="10.8" rx="2" fill="url(#gicon)" stroke="#b06a28" stroke-width="1.2"/>
<rect x="879.55" y="372.5" width="11.1" height="3" fill="url(#gtop)"/>
<text x="885.2499999999999" y="381.3" font-size="7.5" text-anchor="middle" fill="#3a3a3a" font-weight="bold">G</text>
<circle cx="899.55" cy="373.5" r="5.1" fill="url(#globeg)"/>
<path d="M901.6499999999999,371.5 Q902.3499999999999,373.6 904.6499999999999,374.5 Q902.3499999999999,375.3 901.6499999999999,377.90000000000003 Q900.9499999999999,375.3 898.6499999999999,374.5 Q900.9499999999999,373.6 901.6499999999999,371.5 Z" fill="#28b030"/>
<rect x="942.8" y="446.0" width="16" height="16" fill="#c8ecfa"/>
<rect x="943.4" y="446.6" width="14.8" height="14.8" fill="none" stroke="#4a78b0" stroke-width="1.2" stroke-dasharray="1.6,1.6"/>
<path d="M945.8,449.5 L952.8,449.0 L951.3,452.5 L953.3,455.0 L948.8,454.5 L946.8,456.5 Z" fill="#f4b400" stroke="#e89000" stroke-width="0.6"/>
<rect x="952.3" y="455.5" width="4.5" height="4.5" fill="#0a60d0"/>
<path d="M809.7,490.6 L959.3,490.6 L959.3,534.9 L936.5,534.9 L936.5,547 L959.3,547 L959.3,625.5 L809.7,625.5 L809.7,547 L832.5,547 L832.5,534.9 L809.7,534.9 Z" fill="#d4d4d4" stroke="#2a2a2a" stroke-width="1.5" stroke-linejoin="miter"/>
<rect x="812.2" y="548" width="145.0999999999999" height="13.5" fill="#b0c4de"/>
<text x="884.5" y="560.0" font-size="14" fill="#1a1a1a" text-anchor="middle" textLength="137.6" lengthAdjust="spacingAndGlyphs" stroke="#1a1a1a" stroke-width="0.12">SYMLINKMULTIVARDST</text>
<text x="884.5" y="486.2" font-size="14" fill="#1a1a1a" text-anchor="middle" textLength="22.3" lengthAdjust="spacingAndGlyphs" stroke="#1a1a1a" stroke-width="0.12">FB8</text>
<rect x="804.1" y="498.7" width="5.8" height="6.2" rx="0.8" fill="#ececec" stroke="#959595" stroke-width="1.2"/>
<text x="815.7" y="507.4" font-size="14" fill="#1a1a1a" text-anchor="start" textLength="23.0" lengthAdjust="spacingAndGlyphs" stroke="#1a1a1a" stroke-width="0.12">INIT</text>
<rect x="959.0999999999999" y="498.7" width="5.8" height="6.2" rx="0.8" fill="#ececec" stroke="#959595" stroke-width="1.2"/>
<text x="953.5" y="507.4" font-size="14" fill="#1a1a1a" text-anchor="end" textLength="32.3" lengthAdjust="spacingAndGlyphs" stroke="#1a1a1a" stroke-width="0.12">INITO</text>
<rect x="804.1" y="515.5" width="5.8" height="6.2" rx="0.8" fill="#ececec" stroke="#959595" stroke-width="1.2"/>
<text x="815.7" y="524.2" font-size="14" fill="#1a1a1a" text-anchor="start" textLength="26.4" lengthAdjust="spacingAndGlyphs" stroke="#1a1a1a" stroke-width="0.12">REQ</text>
<rect x="959.0999999999999" y="515.5" width="5.8" height="6.2" rx="0.8" fill="#ececec" stroke="#959595" stroke-width="1.2"/>
<text x="953.5" y="524.2" font-size="14" fill="#1a1a1a" text-anchor="end" textLength="25.0" lengthAdjust="spacingAndGlyphs" stroke="#1a1a1a" stroke-width="0.12">CNF</text>
<rect x="804.1" y="572.4" width="5.8" height="6.2" rx="0.8" fill="#ececec" stroke="#959595" stroke-width="1.2"/>
<text x="815.7" y="581.1" font-size="14" fill="#1a1a1a" text-anchor="start" textLength="12.9" lengthAdjust="spacingAndGlyphs" stroke="#1a1a1a" stroke-width="0.12">QI</text>
<rect x="959.0999999999999" y="572.4" width="5.8" height="6.2" rx="0.8" fill="#ececec" stroke="#959595" stroke-width="1.2"/>
<text x="953.5" y="581.1" font-size="14" fill="#1a1a1a" text-anchor="end" textLength="18.9" lengthAdjust="spacingAndGlyphs" stroke="#1a1a1a" stroke-width="0.12">QO</text>
<rect x="804.1" y="588.8" width="5.8" height="6.2" rx="0.8" fill="#ececec" stroke="#959595" stroke-width="1.2"/>
<text x="815.7" y="597.5" font-size="14" fill="#1a1a1a" text-anchor="start" textLength="42.0" lengthAdjust="spacingAndGlyphs" stroke="#1a1a1a" stroke-width="0.12">NAME1</text>
<line x1="815.7" y1="598.9" x2="857.6639062500001" y2="598.9" stroke="#1a1a1a" stroke-width="1"/>
<rect x="959.0999999999999" y="588.8" width="5.8" height="6.2" rx="0.8" fill="#ececec" stroke="#959595" stroke-width="1.2"/>
<text x="953.5" y="597.5" font-size="14" fill="#1a1a1a" text-anchor="end" textLength="46.2" lengthAdjust="spacingAndGlyphs" stroke="#1a1a1a" stroke-width="0.12">STATUS</text>
<rect x="959.0999999999999" y="605.3" width="5.8" height="6.2" rx="0.8" fill="#ececec" stroke="#959595" stroke-width="1.2"/>
<text x="953.5" y="614.0" font-size="14" fill="#1a1a1a" text-anchor="end" textLength="45.8" lengthAdjust="spacingAndGlyphs" stroke="#1a1a1a" stroke-width="0.12">VALUE1</text>
<rect x="877.0" y="536.5" width="15.5" height="6" fill="none" stroke="#7a5a40" stroke-width="0.8" stroke-dasharray="1,1.2"/>
<rect x="878.6" y="534.1" width="12.3" height="10.8" rx="2" fill="url(#gicon)" stroke="#b06a28" stroke-width="1.2"/>
<rect x="879.2" y="534.7" width="11.1" height="3" fill="url(#gtop)"/>
<text x="884.9" y="543.5" font-size="7.5" text-anchor="middle" fill="#3a3a3a" font-weight="bold">G</text>
<circle cx="899.2" cy="535.7" r="5.1" fill="url(#globeg)"/>
<path d="M901.3,533.7 Q902.0,535.8 904.3,536.7 Q902.0,537.5 901.3,540.1 Q900.6,537.5 898.3,536.7 Q900.6,535.8 901.3,533.7 Z" fill="#28b030"/>
<rect x="942.3" y="609.0" width="16" height="16" fill="#c8ecfa"/>
<rect x="942.9" y="609.6" width="14.8" height="14.8" fill="none" stroke="#4a78b0" stroke-width="1.2" stroke-dasharray="1.6,1.6"/>
<path d="M945.3,612.5 L952.3,612.0 L950.8,615.5 L952.8,618.0 L948.3,617.5 L946.3,619.5 Z" fill="#f4b400" stroke="#e89000" stroke-width="0.6"/>
<rect x="951.8" y="618.5" width="4.5" height="4.5" fill="#0a60d0"/>
<path d="M207,198 L216,198" fill="none" stroke="#2a2aa0" stroke-width="1.6" stroke-linejoin="round"/>
<path d="M788,181.5 L796,181.5" fill="none" stroke="#2a2aa0" stroke-width="1.6" stroke-linejoin="round"/>
<path d="M952,164.3 L961,164.3" fill="none" stroke="#2a2aa0" stroke-width="1.6" stroke-linejoin="round"/>
<path d="M952,181.5 L961,181.5" fill="none" stroke="#2a2aa0" stroke-width="1.6" stroke-linejoin="round"/>
<path d="M952,237.7 L961,237.7" fill="none" stroke="#2a2aa0" stroke-width="1.6" stroke-linejoin="round"/>
<path d="M963,428.3 L972,428.3" fill="none" stroke="#2a2aa0" stroke-width="1.6" stroke-linejoin="round"/>
<path d="M963,411.5 L972,411.5" fill="none" stroke="#2a2aa0" stroke-width="1.6" stroke-linejoin="round"/>
<path d="M963,518.6 L971,518.6" fill="none" stroke="#2a2aa0" stroke-width="1.6" stroke-linejoin="round"/>
<path d="M963,591.9 L971,591.9" fill="none" stroke="#2a2aa0" stroke-width="1.6" stroke-linejoin="round"/>
<path d="M963,608.4 L971,608.4" fill="none" stroke="#2a2aa0" stroke-width="1.6" stroke-linejoin="round"/>
<path d="M788,271.2 L796,271.2" fill="none" stroke="#2a2aa0" stroke-width="1.6" stroke-linejoin="round"/>
<path d="M799,444.9 L807,444.9" fill="none" stroke="#2a2aa0" stroke-width="1.6" stroke-linejoin="round"/>
<rect x="37.4" y="267" width="63.1" height="16.30000000000001" fill="#000" opacity="0.25" filter="url(#sh)"/>
<rect x="33.4" y="263" width="63.1" height="16.30000000000001" fill="#ffffe1" stroke="#111" stroke-width="1.5"/>
<text x="36.0" y="275.8" font-size="14" fill="#1a1a1a" text-anchor="start" textLength="50.8" lengthAdjust="spacingAndGlyphs" stroke="#1a1a1a" stroke-width="0.12">T#200ms</text>
<rect x="388.5" y="278" width="27.19999999999999" height="16.30000000000001" fill="#000" opacity="0.25" filter="url(#sh)"/>
<rect x="384.5" y="274" width="27.19999999999999" height="16.30000000000001" fill="#ffffe1" stroke="#111" stroke-width="1.5"/>
<text x="387.0" y="286.8" font-size="14" fill="#1a1a1a" text-anchor="start" textLength="13.5" lengthAdjust="spacingAndGlyphs" stroke="#1a1a1a" stroke-width="0.12">32</text>
<rect x="552.6" y="284.2" width="25.199999999999932" height="15.100000000000023" fill="#000" opacity="0.25" filter="url(#sh)"/>
<rect x="548.6" y="280.2" width="25.199999999999932" height="15.100000000000023" fill="#ffffe1" stroke="#111" stroke-width="1.5"/>
<text x="551.0" y="291.8" font-size="14" fill="#1a1a1a" text-anchor="start" textLength="13.5" lengthAdjust="spacingAndGlyphs" stroke="#1a1a1a" stroke-width="0.12">16</text>
<rect x="741.3" y="233" width="45.10000000000002" height="16.5" fill="#000" opacity="0.25" filter="url(#sh)"/>
<rect x="737.3" y="229" width="45.10000000000002" height="16.5" fill="#ffffe1" stroke="#111" stroke-width="1.5"/>
<text x="740.0" y="242.0" font-size="14" fill="#1a1a1a" text-anchor="start" textLength="33.2" lengthAdjust="spacingAndGlyphs" stroke="#1a1a1a" stroke-width="0.12">TRUE</text>
<rect x="675.3" y="251" width="111.10000000000002" height="14.899999999999977" fill="#000" opacity="0.25" filter="url(#sh)"/>
<rect x="671.3" y="247" width="111.10000000000002" height="14.899999999999977" fill="#ffffe1" stroke="#111" stroke-width="1.5"/>
<text x="673.0" y="258.4" font-size="14" fill="#1a1a1a" text-anchor="start" textLength="100.5" lengthAdjust="spacingAndGlyphs" stroke="#1a1a1a" stroke-width="0.12">'$${PATH}DOUT0'</text>
<rect x="752.7" y="408.3" width="44.89999999999998" height="15.199999999999989" fill="#000" opacity="0.25" filter="url(#sh)"/>
<rect x="748.7" y="404.3" width="44.89999999999998" height="15.199999999999989" fill="#ffffe1" stroke="#111" stroke-width="1.5"/>
<text x="751.5" y="416.0" font-size="14" fill="#1a1a1a" text-anchor="start" textLength="33.2" lengthAdjust="spacingAndGlyphs" stroke="#1a1a1a" stroke-width="0.12">TRUE</text>
<rect x="676.4" y="424.4" width="121.20000000000005" height="15.800000000000011" fill="#000" opacity="0.25" filter="url(#sh)"/>
<rect x="672.4" y="420.4" width="121.20000000000005" height="15.800000000000011" fill="#ffffe1" stroke="#111" stroke-width="1.5"/>
<text x="675.0" y="432.7" font-size="14" fill="#1a1a1a" text-anchor="start" textLength="110.0" lengthAdjust="spacingAndGlyphs" stroke="#1a1a1a" stroke-width="0.12">'$${PATH}MB_OUT...</text>
<rect x="752.7" y="570.7" width="44.89999999999998" height="16.5" fill="#000" opacity="0.25" filter="url(#sh)"/>
<rect x="748.7" y="566.7" width="44.89999999999998" height="16.5" fill="#ffffe1" stroke="#111" stroke-width="1.5"/>
<text x="751.5" y="579.7" font-size="14" fill="#1a1a1a" text-anchor="start" textLength="33.2" lengthAdjust="spacingAndGlyphs" stroke="#1a1a1a" stroke-width="0.12">TRUE</text>
<rect x="684" y="588.1" width="113.60000000000002" height="15.600000000000023" fill="#000" opacity="0.25" filter="url(#sh)"/>
<rect x="680" y="584.1" width="113.60000000000002" height="15.600000000000023" fill="#ffffe1" stroke="#111" stroke-width="1.5"/>
<text x="683.0" y="596.2" font-size="14" fill="#1a1a1a" text-anchor="start" textLength="104.0" lengthAdjust="spacingAndGlyphs" stroke="#1a1a1a" stroke-width="0.12">'$${PATH}MB_IN1'</text>
<rect x="219.1" y="195.5" width="31.30000000000001" height="13.699999999999989" fill="#000" opacity="0.24" filter="url(#sh2)"/>
<rect x="214.6" y="191" width="31.30000000000001" height="13.699999999999989" fill="#add8e6"/>
<text x="215.8" y="201.5" font-size="12.5" fill="#ff0000" text-anchor="start" textLength="28.9" lengthAdjust="spacingAndGlyphs" stroke="#ff0000" stroke-width="0.2">1303</text>
<rect x="761.9" y="178.8" width="30.899999999999977" height="14.5" fill="#000" opacity="0.24" filter="url(#sh2)"/>
<rect x="757.4" y="174.3" width="30.899999999999977" height="14.5" fill="#add8e6"/>
<text x="758.6" y="185.6" font-size="12.5" fill="#ff0000" text-anchor="start" textLength="28.5" lengthAdjust="spacingAndGlyphs" stroke="#ff0000" stroke-width="0.2">1264</text>
<rect x="965.2" y="162.0" width="11.0" height="13.5" fill="#000" opacity="0.24" filter="url(#sh2)"/>
<rect x="960.7" y="157.5" width="11.0" height="13.5" fill="#add8e6"/>
<text x="961.9" y="167.8" font-size="12.5" fill="#000000" text-anchor="start" textLength="8.6" lengthAdjust="spacingAndGlyphs" stroke="#000000" stroke-width="0.2">1</text>
<rect x="965.2" y="178.8" width="29.799999999999955" height="14.199999999999989" fill="#000" opacity="0.24" filter="url(#sh2)"/>
<rect x="960.7" y="174.3" width="29.799999999999955" height="14.199999999999989" fill="#add8e6"/>
<text x="961.9" y="185.3" font-size="12.5" fill="#ff0000" text-anchor="start" textLength="27.4" lengthAdjust="spacingAndGlyphs" stroke="#ff0000" stroke-width="0.2">1264</text>
<rect x="965.5" y="235.0" width="31.700000000000045" height="12.900000000000006" fill="#000" opacity="0.24" filter="url(#sh2)"/>
<rect x="961" y="230.5" width="31.700000000000045" height="12.900000000000006" fill="#add8e6"/>
<text x="962.2" y="240.2" font-size="12.5" fill="#1a1a1a" text-anchor="start" textLength="29.3" lengthAdjust="spacingAndGlyphs" stroke="#1a1a1a" stroke-width="0.2">TRUE</text>
<rect x="755.4" y="268.3" width="37.30000000000007" height="14.800000000000011" fill="#000" opacity="0.24" filter="url(#sh2)"/>
<rect x="750.9" y="263.8" width="37.30000000000007" height="14.800000000000011" fill="#add8e6"/>
<text x="752.1" y="275.4" font-size="12.5" fill="#ff0000" text-anchor="start" textLength="34.9" lengthAdjust="spacingAndGlyphs" stroke="#ff0000" stroke-width="0.2">FALSE</text>
<rect x="976.2" y="409.5" width="31.59999999999991" height="13.5" fill="#000" opacity="0.24" filter="url(#sh2)"/>
<rect x="971.7" y="405" width="31.59999999999991" height="13.5" fill="#add8e6"/>
<text x="972.9" y="415.3" font-size="12.5" fill="#1a1a1a" text-anchor="start" textLength="29.2" lengthAdjust="spacingAndGlyphs" stroke="#1a1a1a" stroke-width="0.2">TRUE</text>
<rect x="976.2" y="426.9" width="23.899999999999977" height="12.900000000000034" fill="#000" opacity="0.24" filter="url(#sh2)"/>
<rect x="971.7" y="422.4" width="23.899999999999977" height="12.900000000000034" fill="#add8e6"/>
<text x="972.9" y="432.1" font-size="12.5" fill="#1a1a1a" text-anchor="start" textLength="21.5" lengthAdjust="spacingAndGlyphs" stroke="#1a1a1a" stroke-width="0.2">'OK'</text>
<rect x="788.9" y="443.5" width="15.100000000000023" height="12.399999999999977" fill="#000" opacity="0.24" filter="url(#sh2)"/>
<rect x="784.4" y="439" width="15.100000000000023" height="12.399999999999977" fill="#add8e6"/>
<text x="785.6" y="448.2" font-size="12.5" fill="#ff0000" text-anchor="start" textLength="12.7" lengthAdjust="spacingAndGlyphs" stroke="#ff0000" stroke-width="0.2">16</text>
<rect x="975.5" y="516.5" width="29.200000000000045" height="13" fill="#000" opacity="0.24" filter="url(#sh2)"/>
<rect x="971" y="512" width="29.200000000000045" height="13" fill="#add8e6"/>
<text x="972.2" y="521.8" font-size="12.5" fill="#ff0000" text-anchor="start" textLength="26.8" lengthAdjust="spacingAndGlyphs" stroke="#ff0000" stroke-width="0.2">2480</text>
<rect x="975.5" y="589.1" width="23.299999999999955" height="13.0" fill="#000" opacity="0.24" filter="url(#sh2)"/>
<rect x="971" y="584.6" width="23.299999999999955" height="13.0" fill="#add8e6"/>
<text x="972.2" y="594.4" font-size="12.5" fill="#1a1a1a" text-anchor="start" textLength="20.9" lengthAdjust="spacingAndGlyphs" stroke="#1a1a1a" stroke-width="0.2">'OK'</text>
<rect x="975.5" y="607.2" width="13" height="11.699999999999932" fill="#000" opacity="0.24" filter="url(#sh2)"/>
<rect x="971" y="602.7" width="13" height="11.699999999999932" fill="#add8e6"/>
<text x="972.2" y="611.2" font-size="12.5" fill="#ff0000" text-anchor="start" textLength="10.6" lengthAdjust="spacingAndGlyphs" stroke="#ff0000" stroke-width="0.2">15</text>
<rect x="568.5" y="81.5" width="24" height="10" rx="2" fill="none" stroke="#e2e2e2" stroke-width="1.2"/>
<line x1="568.7" y1="70" x2="568.7" y2="79" stroke="#e2e2e2" stroke-dasharray="1,1.5"/><line x1="592.6" y1="70" x2="592.6" y2="79" stroke="#e2e2e2" stroke-dasharray="1,1.5"/>
<path d="M580.5,70.5 L580.5,81 M577,73 Q580.5,69 584,73 M577,77 Q580.5,81 584,77" fill="none" stroke="#e2e2e2" stroke-width="1"/>
<rect x="568.5" y="679.3" width="24" height="9.7" rx="2" fill="none" stroke="#e2e2e2" stroke-width="1.2"/>
<line x1="568.7" y1="692" x2="568.7" y2="701" stroke="#e2e2e2" stroke-dasharray="1,1.5"/><line x1="592.6" y1="692" x2="592.6" y2="701" stroke="#e2e2e2" stroke-dasharray="1,1.5"/>
<path d="M580.5,689 L580.5,700 M577,694 Q580.5,690 584,694 M577,697 Q580.5,701 584,697" fill="none" stroke="#e2e2e2" stroke-width="1"/>
<rect x="22.3" y="384.3" width="10.4" height="24" rx="2" fill="none" stroke="#e2e2e2" stroke-width="1.2"/>
<line x1="11" y1="384.5" x2="20" y2="384.5" stroke="#e2e2e2" stroke-dasharray="1,1.5"/><line x1="11" y1="408" x2="20" y2="408" stroke="#e2e2e2" stroke-dasharray="1,1.5"/>
<path d="M11,396.5 L22,396.5 M14,393 Q10,396.5 14,400 M18,393 Q22,396.5 18,400" fill="none" stroke="#e2e2e2" stroke-width="1"/>
<rect x="1108.7" y="384.3" width="10.1" height="24" rx="2" fill="none" stroke="#e2e2e2" stroke-width="1.2"/>
<line x1="1122" y1="384.5" x2="1131" y2="384.5" stroke="#e2e2e2" stroke-dasharray="1,1.5"/><line x1="1122" y1="408" x2="1131" y2="408" stroke="#e2e2e2" stroke-dasharray="1,1.5"/>
<path d="M1119,396.5 L1130,396.5 M1123,393 Q1119,396.5 1123,400 M1127,393 Q1131,396.5 1127,400" fill="none" stroke="#e2e2e2" stroke-width="1"/>
<defs><linearGradient id="hexg2" x1="0" y1="0" x2="1" y2="0"><stop offset="0" stop-color="#2d78f6"/><stop offset="0.5" stop-color="#4a8cf7"/><stop offset="1" stop-color="#6aa2f9"/></linearGradient></defs>
<path d="M926.6,-2 L926.6,8.8 Q926.6,11.6 929,13 L955,28.6 Q957.3,30 959.6,28.6 L986.4,13 Q988.8,11.6 988.8,8.8 L988.8,-2 Z" fill="url(#hexg2)"/>
<path d="M926.6,-2 L926.6,10.5 L944,3.5 L946,-2 Z" fill="#5a96f6" opacity="0.7"/>
<path d="M975,-2 L988.8,-2 L988.8,10.5 Z" fill="#5a98f8" opacity="0.6"/>
<path d="M928.6,-2 L928.6,9 Q928.6,10.8 930.2,11.8 L956,27 Q957.3,27.8 958.6,27 L984.8,11.8 Q986.6,10.8 986.6,9 L986.6,-2" fill="none" stroke="#b0d0ff" stroke-width="0.8"/>
<path d="M944,-2 Q944.5,4 949.5,6.8 Q956,10 960,13.5 Q965,17 967.8,21 L961.6,4.6 Q970,1.5 980.5,-2 Z" fill="#e8f0fd"/>
<text x="939" y="722.2" font-size="17" fill="#c4c4c4" textLength="215" lengthAdjust="spacingAndGlyphs" opacity="0.8">https://blog.csdn.net/yaojiawan</text>
<text x="938" y="721.2" font-size="17" fill="#ffffff" textLength="215" lengthAdjust="spacingAndGlyphs" opacity="0.9">https://blog.csdn.net/yaojiawan</text>
<path d="M1118.8,707.5 L1123,711.7 L1118.8,715.9" fill="none" stroke="#5a5a5a" stroke-width="2.6"/>
</svg></body></html>
